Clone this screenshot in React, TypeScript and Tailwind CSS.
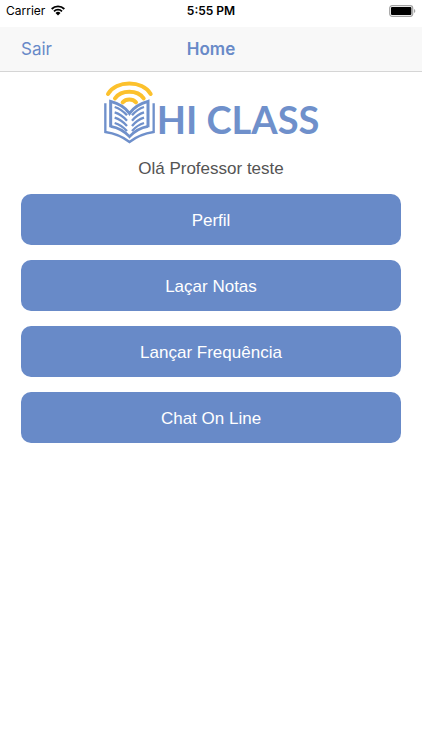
const menu = ["Perfil", "Laçar Notas", "Lançar Frequência", "Chat On Line"];

export default function App() {
  return (
    <div className="min-h-screen bg-white font-['Inter','Liberation_Sans',sans-serif]">
      <StatusBar />
      <NavBar />
      <main className="flex flex-col items-center px-[21px] pt-2 font-['Liberation_Sans',Arial,sans-serif] text-[17px]">
        <Logo />
        <p className="mt-3 leading-[26px] text-[#545454]">Olá Professor teste</p>
        <div className="mt-3 flex w-full flex-col gap-[15px]">
          {menu.map((label) => (
            <button
              key={label}
              type="button"
              className="h-[51px] w-full rounded-[10px] bg-[#688ac8] pt-0.5 text-white"
            >
              {label}
            </button>
          ))}
        </div>
      </main>
    </div>
  );
}

function StatusBar() {
  return (
    <div className="grid h-[27px] grid-cols-3 items-center px-1.5 pb-1.5 text-xs text-black">
      <div className="flex items-center gap-1.5">
        <span>Carrier</span>
        <svg viewBox="0 0 42 32" className="h-[11px] w-[14px]" aria-hidden>
          <g fill="none" stroke="#000" strokeWidth="5.5">
            <path d="M2 11.5a27 27 0 0 1 38 0" />
            <path d="M9 18.5a17 17 0 0 1 24 0" />
          </g>
          <path d="M13.500 23.500a10.500 10.500 0 0 1 15 0L21 31z" />
        </svg>
      </div>
      <span className="text-center font-semibold">5:55 PM</span>
      <svg viewBox="0 0 27 12" className="h-3 w-[27px] justify-self-end" aria-hidden>
        <rect x="0.700" y="0.700" width="23" height="10.600" rx="2.500" fill="#fff" stroke="#a3a3a3" strokeWidth="1.200" />
        <rect x="2" y="2" width="20.400" height="8" rx="1" />
        <path d="M25 4v4c1.800-.8 1.800-3.200 0-4z" fill="#a3a3a3" />
      </svg>
    </div>
  );
}

function NavBar() {
  return (
    <header className="grid h-[45px] grid-cols-3 items-center border-b border-[#d5d5d5] bg-[#f8f8f8] px-[21px] pt-0.5 text-[17px] text-[#688ac8]">
      <button type="button" className="justify-self-start">
        Sair
      </button>
      <h1 className="text-center font-semibold">Home</h1>
    </header>
  );
}

function Logo() {
  return (
    <div className="flex items-end gap-px">
      <svg viewBox="15 12 159 192" className="h-16 w-[53px]" aria-hidden>
        {/* Signal arcs */}
        <g fill="none" stroke="#fcc12d" strokeWidth="12" strokeLinecap="round">
          <path d="M30 54C55 12 133 12 158 54" />
          <path d="M51 67C70 41 118 41 137 67" />
          <path d="M74 79C84 68 104 68 114 79" />
        </g>
        {/* Open book */}
        <g fill="none" stroke="#6f90cb">
          <path strokeWidth="7" d="M22 82V168Q64 174 94.500 198Q125 174 167 168V82" />
          <path strokeWidth="9" d="M38 154V76Q76 86 94.500 112Q113 86 150 76V154" />
          <path strokeWidth="8" d="M38 151Q72 157 94.500 182Q117 157 150 151" />
          <g strokeWidth="7">
            <path d="M50 93Q70 99 87 118M50 109Q70 115 87 134M50 125Q70 131 87 150M50 141Q70 147 87 165" />
            <path d="M138 93Q118 99 102 118M138 109Q118 115 102 134M138 125Q118 131 102 150M138 141Q118 147 102 165" />
          </g>
        </g>
      </svg>
      <span className="font-['Lato',sans-serif] text-[38px] leading-[50px] font-bold text-[#6f90cb]">
        HI CLASS
      </span>
    </div>
  );
}
